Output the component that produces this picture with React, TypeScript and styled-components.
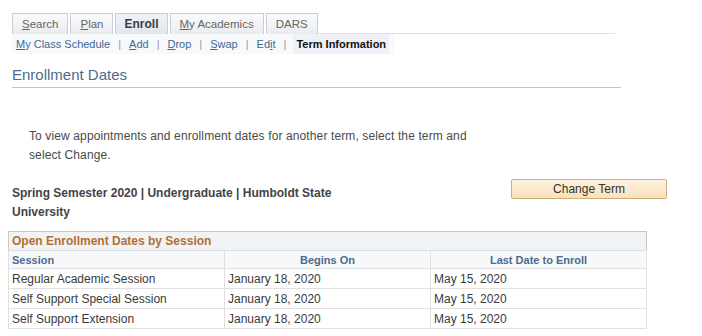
import React from 'react'
import styled, {createGlobalStyle} from 'styled-components'

const GlobalStyle = createGlobalStyle`
    body {
        margin: 0;
        background: #ffffff;
        font-family: Arial, "Liberation Sans", sans-serif;
        font-size: 12px;
        color: #333;
    }
`

const Page = styled.div`
    width: 702px;
    height: 336px;
    overflow: hidden;
    display: flex;
    flex-direction: column;
`

const TabBar = styled.div`
    display: flex;
    align-items: flex-end;
    gap: 2px;
    width: 603px;
    margin: 13px 0 0 12px;
    height: 21px;
`

const Tab = styled.div<{$active?: boolean}>`
    height: 20px;
    padding: 0 ${(p) => (p.$active ? '8px' : '9px')};
    display: flex;
    align-items: center;
    border: 1px solid #c9ced4;
    border-bottom: none;
    background: ${(p) =>
        p.$active
            ? 'linear-gradient(#eef2f7, #dfe6ee)'
            : 'linear-gradient(#fbfbfc, #e9ecef)'};
    color: ${(p) => (p.$active ? '#3c3c3c' : '#666')};
    font-weight: ${(p) => (p.$active ? 700 : 400)};
    font-size: ${(p) => (p.$active ? '12px' : '11.5px')};
    white-space: nowrap;
`

const TabFill = styled.div`
    flex: 1;
    height: 1px;
    background: #dde2e8;
    margin-left: -2px;
`

const Key = styled.span`
    text-decoration: underline;
`

const SubNav = styled.div`
    display: flex;
    align-items: center;
    height: 20px;
    width: 383px;
    margin-left: 12px;
    padding-left: 4px;
    box-sizing: border-box;
    background: #f7f9fb;
    white-space: nowrap;
    font-size: 11px;
`

const SubLink = styled.span`
    color: #3d6a98;
    flex-shrink: 0;
`

const SubSep = styled.span`
    color: #9a9a9a;
    margin: 0 8px;
    flex-shrink: 0;
`

const SubActive = styled.span`
    color: #111;
    font-weight: 700;
    background: #eef2f6;
    padding: 4px 3px;
    margin-left: -1px;
    flex-shrink: 0;
`

const Title = styled.div`
    margin: 9px 0 0 12px;
    width: 609px;
    height: 25px;
    display: flex;
    align-items: center;
    font-size: 15px;
    color: #4c6c8b;
    border-bottom: 1px solid #c4c4c4;
    box-sizing: border-box;
    padding-bottom: 1px;
`

const Instruction = styled.p`
    margin: 39px 0 0 29px;
    width: 470px;
    line-height: 19px;
    color: #4a4a4a;
    letter-spacing: 0.12px;
`

const TermRow = styled.div`
    display: flex;
    align-items: flex-start;
    margin: 14px 0 0 12px;
`

const TermLabel = styled.div`
    width: 340px;
    line-height: 19px;
    font-weight: 700;
    color: #444;
    padding-top: 5px;
`

const Button = styled.button`
    margin-left: 159px;
    width: 156px;
    height: 20px;
    border: 1px solid #cfae7e;
    border-radius: 2px;
    background: linear-gradient(#fdf3e2, #f9e1b8);
    font-family: Arial, "Liberation Sans", sans-serif;
    font-size: 12px;
    color: #333;
    padding: 0;
`

const Grid = styled.table`
    margin: 9px 0 0 8px;
    width: 639px;
    border-collapse: collapse;
    border: 1px solid #c8c8c8;
    table-layout: fixed;
`

const Caption = styled.th`
    text-align: left;
    height: 18px;
    padding: 0 0 0 3px;
    background: #f1f3f5;
    color: #b36f37;
    font-size: 12px;
    font-weight: 700;
    border-bottom: 1px solid #dcdfe3;
`

const Head = styled.th<{$align?: string}>`
    height: 17px;
    padding: 0 3px;
    text-align: ${(p) => p.$align || 'center'};
    background: #f7f8fa;
    color: #4a6c90;
    font-size: 11px;
    font-weight: 700;
    border: 1px solid #e0e2e5;
`

const Cell = styled.td`
    height: 19px;
    padding: 0 3px;
    color: #3a3a3a;
    border: 1px solid #e0e0e0;
    white-space: nowrap;
`

const rows = [
    'Regular Academic Session',
    'Self Support Special Session',
    'Self Support Extension',
]

export default function App() {
    return (
        <Page>
            <GlobalStyle />
            <TabBar>
                <Tab><Key>S</Key>earch</Tab>
                <Tab><Key>P</Key>lan</Tab>
                <Tab $active>Enroll</Tab>
                <Tab><Key>M</Key>y Academics</Tab>
                <Tab>DARS</Tab>
                <TabFill />
            </TabBar>
            <SubNav>
                <SubLink><Key>M</Key>y Class Schedule</SubLink>
                <SubSep>|</SubSep>
                <SubLink><Key>A</Key>dd</SubLink>
                <SubSep>|</SubSep>
                <SubLink><Key>D</Key>rop</SubLink>
                <SubSep>|</SubSep>
                <SubLink><Key>S</Key>wap</SubLink>
                <SubSep>|</SubSep>
                <SubLink>Ed<Key>i</Key>t</SubLink>
                <SubSep>|</SubSep>
                <SubActive>Term Information</SubActive>
            </SubNav>
            <Title>Enrollment Dates</Title>
            <Instruction>
                To view appointments and enrollment dates for another term, select the term and select Change.
            </Instruction>
            <TermRow>
                <TermLabel>Spring Semester 2020 | Undergraduate | Humboldt State University</TermLabel>
                <Button>Change Term</Button>
            </TermRow>
            <Grid>
                <colgroup>
                    <col style={{width: 216}} />
                    <col style={{width: 206}} />
                    <col />
                </colgroup>
                <thead>
                    <tr>
                        <Caption colSpan={3}>Open Enrollment Dates by Session</Caption>
                    </tr>
                    <tr>
                        <Head $align="left">Session</Head>
                        <Head>Begins On</Head>
                        <Head>Last Date to Enroll</Head>
                    </tr>
                </thead>
                <tbody>
                    {rows.map((r) => (
                        <tr key={r}>
                            <Cell>{r}</Cell>
                            <Cell>January 18, 2020</Cell>
                            <Cell>May 15, 2020</Cell>
                        </tr>
                    ))}
                </tbody>
            </Grid>
        </Page>
    )
}
